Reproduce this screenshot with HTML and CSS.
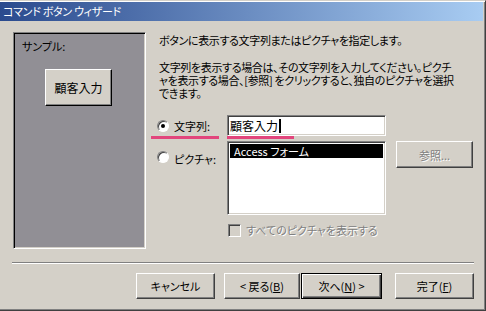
FILE: index.html
```html
<!DOCTYPE html>
<html lang="ja">
  <head>
    <meta charset="UTF-8" />
    <title>コマンド ボタン ウィザード</title>
    <link rel="stylesheet" href="styles.css">
  </head>
  <body>
    <div class="window">
      <div class="titlebar">コマンド ボタン ウィザード</div>

      <div class="content">
        <div class="sample">
          <div class="sample-label">サンプル:</div>
          <div class="sample-btn">顧客入力</div>
        </div>

        <div class="main">
          <p class="intro">ボタンに表示する文字列またはピクチャを指定します。</p>
          <p class="desc">
            文字列を表示する場合は、その文字列を入力してください。ピクチ<br />
            ャを表示する場合、[参照] をクリックすると、独自のピクチャを選択<br />
            できます。
          </p>

          <div class="choices">
            <label class="opt"><span class="radio checked"></span>文字列:</label>
            <div class="field">顧客入力<span class="caret"></span></div>
            <div></div>
            <div></div>

            <span class="mark mark-opt"></span>
            <span class="mark mark-field"></span>
            <div></div>
            <div></div>

            <label class="opt opt-pic"><span class="radio"></span>ピクチャ:</label>
            <div class="list">
              <div class="list-item selected">Access フォーム</div>
            </div>
            <div></div>
            <div class="btn browse disabled">参照...</div>

            <div></div>
            <label class="check"><span class="checkbox"></span><span class="disabled">すべてのピクチャを表示する</span></label>
          </div>
        </div>
      </div>

      <div class="separator"></div>

      <div class="buttons">
        <div class="btn btn-cancel">キャンセル</div>
        <div class="btn btn-back">&lt; 戻る(<u>B</u>)</div>
        <div class="btn btn-next default">次へ(<u>N</u>) &gt;</div>
        <div class="btn btn-finish">完了(<u>F</u>)</div>
      </div>
    </div>
  </body>
</html>
```

FILE: styles.css
```css
body {
  margin: 0;
  font-family: "Noto Sans CJK JP", sans-serif;
  font-size: 11px;
  font-feature-settings: "palt";
  color: #000;
  background-color: #d4d0c8;
}
p {
  margin: 0;
}
.window {
  box-sizing: border-box;
  width: 486px;
  height: 311px;
  background-color: #d4d0c8;
  border-top: 1px solid #d4d0c8;
  border-right: 1px solid #404040;
  border-bottom: 1px solid #404040;
  box-shadow: inset 0 1px #fff, inset -1px -1px #808080;
  padding-top: 1px;
}
.titlebar {
  height: 19px;
  margin-right: 2px;
  line-height: 19px;
  padding-left: 3px;
  letter-spacing: -0.3px;
  color: #fff;
  background: linear-gradient(to right, #2a4a8e, #a8ccf2);
  white-space: nowrap;
}
.content {
  display: flex;
  padding-top: 11px;
}
.sample {
  box-sizing: border-box;
  flex-shrink: 0;
  width: 133px;
  height: 217px;
  margin-left: 13px;
  padding: 7px 0 0 8px;
  background-color: #918f95;
  border: 1px solid;
  border-color: #808080 #fff #fff #808080;
  box-shadow: inset 1px 1px #000, inset -1px -1px #d4d0c8;
}
.sample-label {
  line-height: 13px;
}
.sample-btn {
  box-sizing: border-box;
  width: 67px;
  height: 37px;
  margin: 16px 0 0 23px;
  display: flex;
  align-items: center;
  justify-content: center;
  font-size: 12px;
  background-color: #d4d0c8;
  border: 1px solid;
  border-color: #fff #000 #000 #fff;
  box-shadow: inset -1px -1px #808080;
}
.main {
  margin-left: 13px;
  padding-top: 2px;
}
.intro,
.desc {
  line-height: 13px;
  letter-spacing: -0.35px;
  white-space: nowrap;
}
.desc {
  margin-top: 14px;
}
.choices {
  display: grid;
  grid-template-columns: 68px 159px 10px 77px;
  grid-template-rows: 21px 5px 74px auto;
  margin-top: 15px;
}
.opt {
  display: flex;
  align-items: center;
  gap: 5px;
  margin-left: -2px;
}
.opt-pic {
  align-items: flex-start;
  padding-top: 10px;
}
.radio {
  box-sizing: border-box;
  width: 12px;
  height: 12px;
  border-radius: 50%;
  background: #fff;
  border: 1px solid;
  border-color: #808080 #fff #fff #808080;
  box-shadow: inset 1px 1px #404040;
  position: relative;
}
.radio.checked::after {
  content: "";
  position: absolute;
  left: 3px;
  top: 3px;
  width: 4px;
  height: 4px;
  border-radius: 50%;
  background: #000;
}
.field,
.list {
  box-sizing: border-box;
  background: #fff;
  border: 1px solid;
  border-color: #808080 #fff #fff #808080;
  box-shadow: inset 1px 1px #404040, inset -1px -1px #d4d0c8;
}
.field {
  display: flex;
  align-items: center;
  padding-left: 2px;
  font-size: 12px;
  line-height: 16px;
}
.caret {
  width: 2px;
  height: 14px;
  margin-left: 1px;
  background: #000;
}
.mark {
  height: 3px;
  background: #e2457c;
}
.mark-opt {
  margin-left: -8px;
  margin-right: 8px;
}
.mark-field {
  width: 67px;
}
.list {
  padding: 2px;
}
.list-item {
  height: 14px;
  line-height: 14px;
  padding-left: 4px;
}
.list-item.selected {
  background: #000;
  color: #fff;
}
.check {
  grid-column: 2 / 5;
  display: flex;
  align-items: center;
  gap: 5px;
  margin-top: 7px;
  margin-left: 1px;
}
.checkbox {
  box-sizing: border-box;
  width: 13px;
  height: 13px;
  background: #d4d0c8;
  border: 1px solid;
  border-color: #808080 #fff #fff #808080;
  box-shadow: inset 1px 1px #404040;
}
.disabled {
  color: #808080;
  text-shadow: 1px 1px #fff;
}
.btn {
  box-sizing: border-box;
  height: 26px;
  display: flex;
  align-items: center;
  justify-content: center;
  background-color: #d4d0c8;
  border: 1px solid;
  border-color: #fff #404040 #404040 #fff;
  box-shadow: inset -1px -1px #808080;
  white-space: nowrap;
}
.btn u {
  text-underline-offset: 1px;
}
.browse {
  height: 27px;
}
.separator {
  height: 1px;
  margin: 13px 11px 0 12px;
  background: #808080;
  border-bottom: 1px solid #fff;
}
.buttons {
  display: flex;
  padding: 9px 0 0 136px;
}
.btn-cancel {
  width: 79px;
}
.btn-back {
  width: 76px;
  margin-left: 9px;
}
.btn-next {
  width: 81px;
  margin-left: 1px;
}
.btn.default {
  border-color: #000;
  box-shadow: inset 1px 1px #fff, inset -1px -1px #404040, inset -2px -2px #808080;
}
.btn-finish {
  width: 79px;
  margin-left: 13px;
}
```
